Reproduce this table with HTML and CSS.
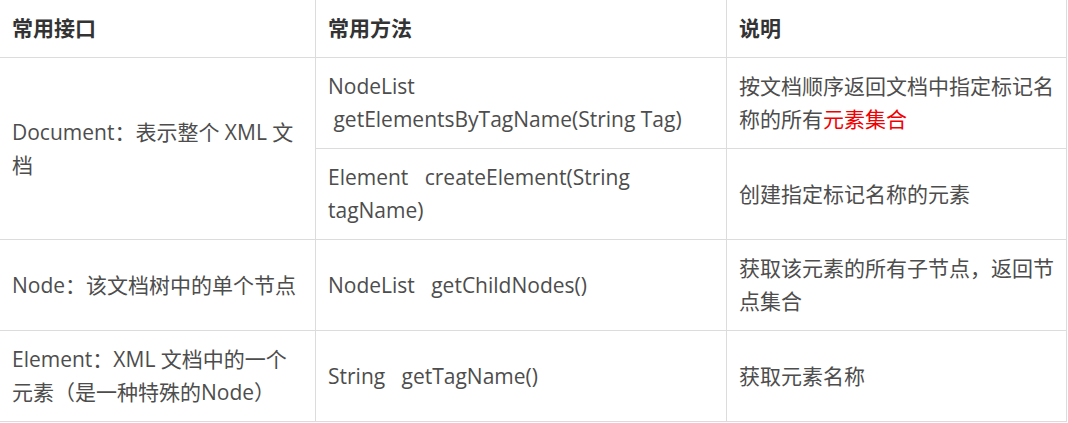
FILE: index.html
```html
<!DOCTYPE html>
<html lang="zh-CN">
<head>
<meta charset="utf-8">
<title>XML DOM 常用接口</title>
<link rel="stylesheet" href="styles.css">
</head>
<body>
<table class="api-table">
  <colgroup>
    <col class="c1">
    <col class="c2">
    <col class="c3">
  </colgroup>
  <thead>
    <tr>
      <th>常用接口</th>
      <th>常用方法</th>
      <th>说明</th>
    </tr>
  </thead>
  <tbody>
    <tr>
      <td rowspan="2">Document：表示整个 XML 文档</td>
      <td>NodeList &nbsp;getElementsByTagName(String Tag)</td>
      <td>按文档顺序返回文档中指定标记名称的所有<span class="red">元素集合</span></td>
    </tr>
    <tr>
      <td>Element&nbsp;&nbsp; createElement(String tagName)</td>
      <td>创建指定标记名称的元素</td>
    </tr>
    <tr>
      <td>Node：该文档树中的单个节点</td>
      <td>NodeList&nbsp;&nbsp; getChildNodes()</td>
      <td>获取该元素的所有子节点，返回节点集合</td>
    </tr>
    <tr>
      <td>Element：XML 文档中的一个元素（是一种特殊的Node）</td>
      <td>String&nbsp;&nbsp; getTagName()</td>
      <td>获取元素名称</td>
    </tr>
  </tbody>
</table>
</body>
</html>
```

FILE: styles.css
```css
html, body {
  margin: 0;
  padding: 0;
  background: #ffffff;
}

.api-table {
  border-collapse: collapse;
  table-layout: fixed;
  width: 1067px;
  margin: -1px 0 0 -1px;
  font-family: "Open Sans", "Noto Sans CJK SC", sans-serif;
  font-size: 21px;
  line-height: 33px;
  color: #4d4d4d;
}

.api-table .c1 { width: 316px; }
.api-table .c2 { width: 411px; }
.api-table .c3 { width: 340px; }

.api-table th,
.api-table td {
  border: 1px solid #dcdcdc;
  padding: 12px 11px 12px 12px;
  text-align: left;
  vertical-align: middle;
  word-wrap: break-word;
}

.api-table th {
  font-weight: bold;
  color: #333333;
  background: #ffffff;
}

.red {
  color: #f00000;
}
```
